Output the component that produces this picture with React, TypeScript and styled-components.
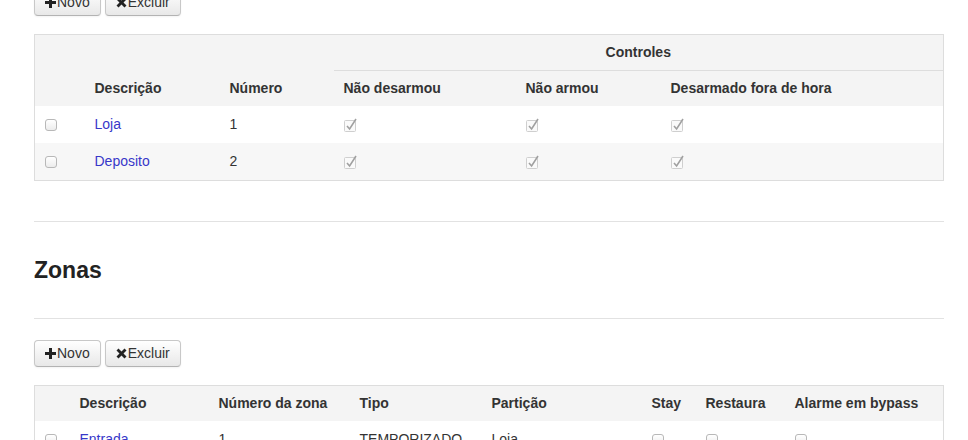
import { FC } from "react"
import styled, { createGlobalStyle } from "styled-components"

const GlobalStyle = createGlobalStyle`
  body {
    margin: 0;
    background: #fff;
    font-family: "Liberation Sans", Arial, sans-serif;
    font-size: 14px;
    color: #333;
  }
`

const Page = styled.div`
  margin-top: -11px;
  padding: 0 24px 0 34px;
`

const Toolbar = styled.div`
  display: flex;
  gap: 4px;
  margin-bottom: 18px;
`

const Button = styled.button`
  display: inline-flex;
  align-items: center;
  height: 27px;
  padding: 0 10px;
  font-family: "Liberation Sans", Arial, sans-serif;
  font-size: 14px;
  line-height: 17px;
  color: #333;
  background: linear-gradient(#ffffff, #e8e8e8);
  border: 1px solid #c8c8c8;
  border-bottom-color: #b3b3b3;
  border-radius: 4px;
  box-shadow: inset 0 1px 0 rgba(255,255,255,0.2), 0 1px 2px rgba(0,0,0,0.05);

  svg {
    margin-right: 1px;
  }
`

const Table = styled.table`
  width: 100%;
  table-layout: fixed;
  border-collapse: collapse;
  border: 1px solid #dddddd;

  thead {
    background: #f4f4f4;
  }

  th {
    text-align: left;
    font-weight: bold;
    padding: 9px 10px;
    line-height: 17px;
    vertical-align: bottom;
  }

  td {
    padding: 10px 10px;
    line-height: 17px;
    vertical-align: middle;
  }

  tbody tr:nth-child(even) {
    background: #f7f7f7;
  }
`

const Col = styled.col<{ $w?: number }>`
  width: ${({ $w }) => ($w ? `${$w}px` : "auto")};
`

const GroupHeader = styled.th`
  && {
    text-align: center;
    border-bottom: 1px solid #dddddd;
  }
`

const Link = styled.a`
  color: #3838c9;
  text-decoration: none;
`

const Box = styled.span`
  display: block;
  width: 10px;
  height: 10px;
  margin-top: 1px;
  border: 1px solid #b8b8b8;
  border-radius: 3px;
  background: linear-gradient(#ffffff, #ececec);
`

const CheckSvg = styled.svg`
  display: block;
`

const Section = styled.div`
  margin-top: 40px;
  height: 96px;
  display: flex;
  align-items: center;
  border-top: 1px solid #e2e2e2;
  border-bottom: 1px solid #e2e2e2;
`

const Heading = styled.h2`
  margin: 0;
  font-size: 23px;
  font-weight: bold;
  color: #222;
`

const SecondToolbar = styled(Toolbar)`
  margin-top: 21px;
`

const PlusIcon = () => (
  <svg width="11" height="11" viewBox="0 0 11 11">
    <path d="M4 0h3v4h4v3H7v4H4V7H0V4h4z" fill="#222" />
  </svg>
)

const RemoveIcon = () => (
  <svg width="11" height="11" viewBox="0 0 11 11">
    <path
      d="M2.5 0.5L5.5 3.5L8.5 0.5L10.5 2.5L7.5 5.5L10.5 8.5L8.5 10.5L5.5 7.5L2.5 10.5L0.5 8.5L3.5 5.5L0.5 2.5Z"
      fill="#222"
    />
  </svg>
)

const CheckedDisabled = () => (
  <CheckSvg width="14" height="14" viewBox="0 0 14 14">
    <rect x="0.5" y="2.5" width="11" height="11" rx="1" fill="#fafafa" stroke="#cfcfcf" />
    <path d="M3 8l2.6 3L12 1" fill="none" stroke="#a0a0a0" strokeWidth="1.6" />
  </CheckSvg>
)

interface Particao {
  descricao: string
  numero: number
}

const particoes: Particao[] = [
  { descricao: "Loja", numero: 1 },
  { descricao: "Deposito", numero: 2 },
]

interface Zona {
  descricao: string
  numero: number
  tipo: string
  particao: string
}

const zonas: Zona[] = [
  { descricao: "Entrada", numero: 1, tipo: "TEMPORIZADO", particao: "Loja" },
]

const Actions: FC = () => (
  <>
    <Button>
      <PlusIcon />
      Novo
    </Button>
    <Button>
      <RemoveIcon />
      Excluir
    </Button>
  </>
)

const App: FC = () => {
  return (
    <Page>
      <GlobalStyle />
      <Toolbar>
        <Actions />
      </Toolbar>
      <Table>
        <colgroup>
          <Col $w={50} />
          <Col $w={135} />
          <Col $w={114} />
          <Col $w={182} />
          <Col $w={145} />
          <Col />
        </colgroup>
        <thead>
          <tr>
            <th rowSpan={2}></th>
            <th rowSpan={2}>Descrição</th>
            <th rowSpan={2}>Número</th>
            <GroupHeader colSpan={3}>Controles</GroupHeader>
          </tr>
          <tr>
            <th>Não desarmou</th>
            <th>Não armou</th>
            <th>Desarmado fora de hora</th>
          </tr>
        </thead>
        <tbody>
          {particoes.map((p) => (
            <tr key={p.numero}>
              <td><Box /></td>
              <td><Link href="#">{p.descricao}</Link></td>
              <td>{p.numero}</td>
              <td><CheckedDisabled /></td>
              <td><CheckedDisabled /></td>
              <td><CheckedDisabled /></td>
            </tr>
          ))}
        </tbody>
      </Table>

      <Section>
        <Heading>Zonas</Heading>
      </Section>

      <SecondToolbar>
        <Actions />
      </SecondToolbar>
      <Table>
        <colgroup>
          <Col $w={35} />
          <Col $w={139} />
          <Col $w={141} />
          <Col $w={132} />
          <Col $w={160} />
          <Col $w={54} />
          <Col $w={89} />
          <Col />
        </colgroup>
        <thead>
          <tr>
            <th></th>
            <th>Descrição</th>
            <th>Número da zona</th>
            <th>Tipo</th>
            <th>Partição</th>
            <th>Stay</th>
            <th>Restaura</th>
            <th>Alarme em bypass</th>
          </tr>
        </thead>
        <tbody>
          {zonas.map((z) => (
            <tr key={z.numero}>
              <td><Box /></td>
              <td><Link href="#">{z.descricao}</Link></td>
              <td>{z.numero}</td>
              <td>{z.tipo}</td>
              <td>{z.particao}</td>
              <td><Box /></td>
              <td><Box /></td>
              <td><Box /></td>
            </tr>
          ))}
        </tbody>
      </Table>
    </Page>
  )
}

export default App
